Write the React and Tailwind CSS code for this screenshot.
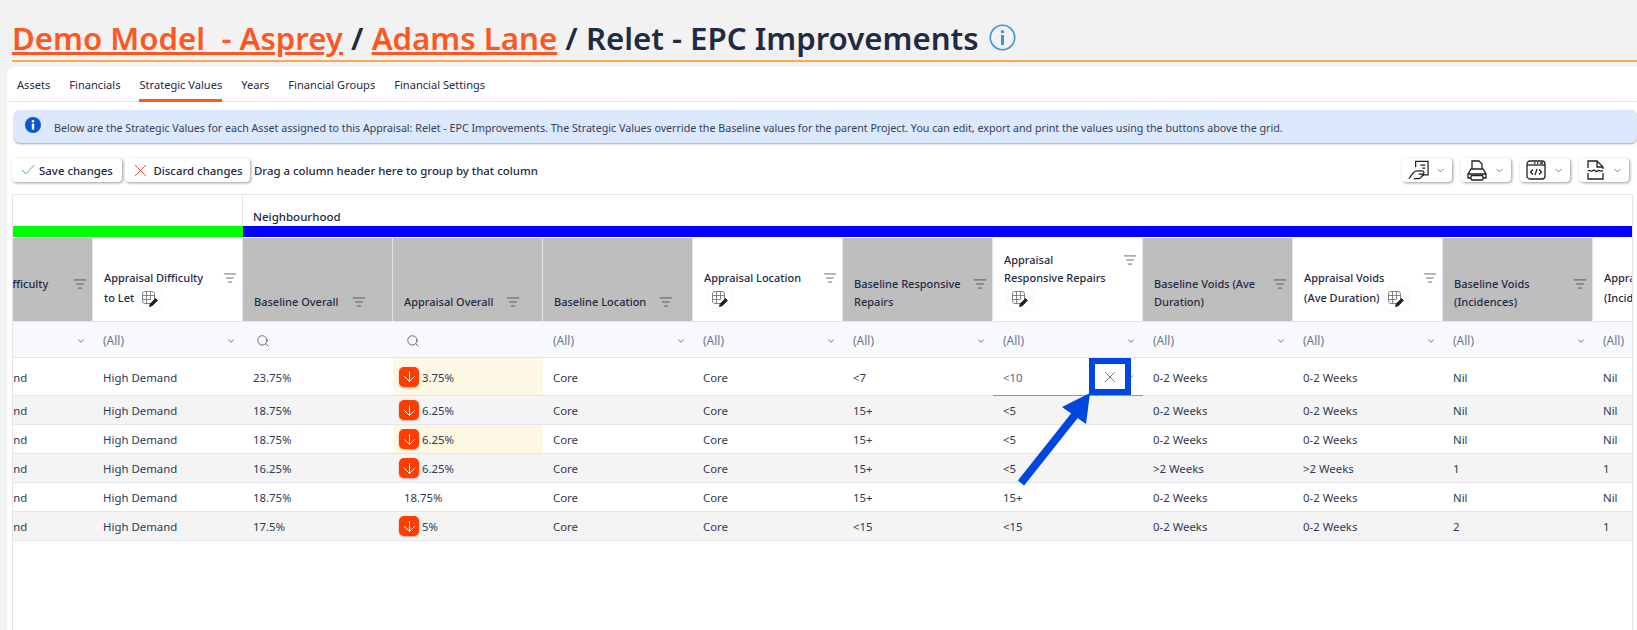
import React from "react";
import { ArrowDown, Check, ChevronDown, ListFilter, Search, X } from "lucide-react";

const tabs = ["Assets", "Financials", "Strategic Values", "Years", "Financial Groups", "Financial Settings"];

// grey = baseline (read only), white = appraisal (editable)
const columns = [
  { title: "Baseline Difficulty\nto Let", grey: true },
  { title: "Appraisal Difficulty\nto Let", box: true },
  { title: "Baseline Overall", grey: true, inlineFilter: true, search: true },
  { title: "Appraisal Overall", grey: true, inlineFilter: true, search: true },
  { title: "Baseline Location", grey: true, inlineFilter: true },
  { title: "Appraisal Location\n", box: true },
  { title: "Baseline Responsive\nRepairs", grey: true },
  { title: "Appraisal\nResponsive Repairs\n", box: true },
  { title: "Baseline Voids (Ave\nDuration)", grey: true },
  { title: "Appraisal Voids\n(Ave Duration)", box: true },
  { title: "Baseline Voids\n(Incidences)", grey: true },
  { title: "Appraisal Voids\n(Incidences)", box: true },
];

const rows = [
  { height: "h-[38px]", pad: "pt-[3px]", base: "23.75%", value: "3.75%", down: true, yellow: true, cells: ["Core", "Core", "<7", "<10", "0-2 Weeks", "0-2 Weeks", "Nil", "Nil"] },
  { height: "h-[29px]", pad: "pt-[2px]", base: "18.75%", value: "6.25%", down: true, cells: ["Core", "Core", "15+", "<5", "0-2 Weeks", "0-2 Weeks", "Nil", "Nil"] },
  { height: "h-[29px]", pad: "pt-[2px]", base: "18.75%", value: "6.25%", down: true, yellow: true, cells: ["Core", "Core", "15+", "<5", "0-2 Weeks", "0-2 Weeks", "Nil", "Nil"] },
  { height: "h-[29px]", pad: "pt-[2px]", base: "16.25%", value: "6.25%", down: true, cells: ["Core", "Core", "15+", "<5", ">2 Weeks", ">2 Weeks", "1", "1"] },
  { height: "h-[29px]", pad: "pt-[2px]", base: "18.75%", value: "18.75%", cells: ["Core", "Core", "15+", "15+", "0-2 Weeks", "0-2 Weeks", "Nil", "Nil"] },
  { height: "h-[29px]", pad: "pt-[2px]", base: "17.5%", value: "5%", down: true, cells: ["Core", "Core", "<15", "<15", "0-2 Weeks", "0-2 Weeks", "2", "1"] },
];

const TableEditIcon = () => (
  <svg width="18" height="18" viewBox="0 0 18 18" fill="none" stroke="#777" strokeWidth="0.9">
    <rect x="1.5" y="1.5" width="12" height="12" rx="2.5" />
    <path d="M1.5 5.5h12M1.5 9.5h8M5.5 1.5v12M9.5 1.5v8" />
    <path d="M8.5 16.5l.7-2.6 5.3-5.3 1.9 1.9-5.3 5.3z" fill="#222" stroke="#222" />
  </svg>
);

const HandDocIcon = () => (
  <svg width="21" height="20" viewBox="0 0 22 20" fill="none" stroke="#222" strokeWidth="1.3">
    <path d="M8 7V1h13v14h-7" />
    <path d="M13 5h5M15 8h3" />
    <path d="M1 19l4-5.5c1.5-1.8 3-2.5 5-2.5h5a1.6 1.6 0 0 1 0 3.4h-4" />
    <path d="M6 19h6l5-4.5" />
  </svg>
);

const PrinterIcon = () => (
  <svg width="20" height="21" viewBox="0 0 20 21" fill="none" stroke="#222" strokeWidth="1.3">
    <path d="M5 9V1h7l3 3v5" />
    <path d="M1 14l3-5h12l3 5v4h-3M4 18H1v-4h18" />
    <rect x="4" y="15.5" width="12" height="4.5" rx="1" />
  </svg>
);

const CodeIcon = () => (
  <svg width="20" height="20" viewBox="0 0 20 20" fill="none" stroke="#222" strokeWidth="1.3">
    <rect x="1" y="1" width="18" height="18" rx="3" />
    <path d="M1 5h18" />
    <path d="M8 3h1.5M11 3h1.5M14 3h3" />
    <path d="M7 9.5L4.5 12 7 14.5M13 9.5l2.5 2.5L13 14.5M11 9l-2 6" />
  </svg>
);

const TornFileIcon = () => (
  <svg width="17" height="20" viewBox="0 0 17 20" fill="none" stroke="#222" strokeWidth="1.3">
    <path d="M1 8V1h9l6 6v2" />
    <path d="M10 1v6h6" />
    <path d="M1 11c1.5-1.8 2.5 1 4 0s2-1.8 3.5 0 2.5-1.2 3.5-.6 2.5 1.2 4 0" />
    <path d="M1 13v6h15v-6" />
  </svg>
);

const ExportButton = ({ children }) => (
  <button className="flex h-6 w-[50px] items-center rounded bg-white pl-1 shadow-[1px_1px_3px_rgba(0,0,0,0.4)]">
    <span className="flex w-[24px] justify-center">{children}</span>
    <ChevronDown size={11} strokeWidth={1.6} className="ml-[5px] text-[#2f5fa8]" />
  </button>
);

const HeaderCell = ({ col }) => (
  <div
    className={`flex h-full w-[150px] shrink-0 flex-col justify-end border-r border-[#e3e4ec] pb-[10px] pl-[11px] pr-[5px] ${
      col.grey ? "bg-[#bebebe]" : "bg-white"
    }`}
  >
    <div className={`flex items-start ${col.inlineFilter ? "gap-[13px]" : "justify-between"}`}>
      <span className="whitespace-pre text-[11px] font-medium leading-[18px] text-[#1f2a44]">
        {col.title}
        {col.box && (
          <span className="ml-[4px] inline-flex h-6 w-6 items-center justify-center rounded-md bg-white align-middle shadow-[0_0_2px_rgba(0,0,0,0.1)]">
            <TableEditIcon />
          </span>
        )}
      </span>
      <ListFilter size={14} strokeWidth={1.2} className="mt-[2px] shrink-0 text-[#333]" />
    </div>
  </div>
);

const FilterCell = ({ col }) => (
  <div className="flex h-full w-[150px] shrink-0 items-center justify-between pl-[10px] pr-[7px] pt-[2px]">
    {col.search ? (
      <Search size={14} strokeWidth={1.2} className="ml-[3px] text-[#333]" />
    ) : (
      <>
        <span className="text-[12px] text-[#6b7690]">(All)</span>
        <ChevronDown size={10} strokeWidth={1.6} className="text-[#333]" />
      </>
    )}
  </div>
);

const Cell = ({ children, className = "pl-[10px]" }) => (
  <div className={`flex h-full w-[150px] shrink-0 items-center ${className}`}>{children}</div>
);

export default function App() {
  return (
    <div className="relative h-[630px] w-[1637px] overflow-hidden bg-[#f2f2f2] font-['Noto_Sans',sans-serif] text-[#1f2a44]">
      <h1 className="ml-3 flex h-[62px] items-end gap-[10px] border-b-2 border-[#f5ab55] pb-[2px] text-[31.2px] font-semibold leading-[40px] whitespace-pre">
        <span>
          <a className="text-[#ff5722] underline">Demo Model  - Asprey</a> / <a className="text-[#ff5722] underline">Adams Lane</a> / Relet - EPC Improvements
        </span>
        <svg width="27" height="27" viewBox="0 0 27 27" fill="none" className="mb-[7px]">
          <circle cx="13.5" cy="13.5" r="12.2" stroke="#3a94d6" strokeWidth="1.6" />
          <circle cx="13.5" cy="7.8" r="1.7" fill="#3a94d6" />
          <rect x="12" y="11" width="3" height="10" fill="#3a94d6" />
        </svg>
      </h1>

      <div className="ml-[7px] mt-[5px] h-[563px] rounded-tl-lg bg-white">
        <div className="flex h-[35px] gap-[19px] border-b border-[#e3e4ec] pl-[10px] text-[11.1px]">
          {tabs.map((tab) => (
            <div
              key={tab}
              className={`flex h-[35px] items-center pt-[1px] ${tab === "Strategic Values" ? "border-b-[3px] border-[#ff5722] pt-[4px]" : ""}`}
            >
              {tab}
            </div>
          ))}
        </div>

        <div className="ml-[7px] mt-2 flex h-[33px] items-center rounded-md bg-[#dce8fb] pl-[11px] text-[10.68px] text-[#33415c] shadow-[0_1px_2px_rgba(0,0,0,0.35)]">
          <svg width="16" height="16" viewBox="0 0 16 16" className="mb-[3px] mr-[13px] shrink-0">
            <circle cx="8" cy="8" r="8" fill="#0b57d0" />
            <circle cx="8" cy="4.3" r="1.3" fill="#fff" />
            <rect x="6.8" y="6.6" width="2.4" height="6" fill="#fff" />
          </svg>
          <span className="pt-[3px]">
            Below are the Strategic Values for each Asset assigned to this Appraisal: Relet - EPC Improvements. The Strategic Values override the Baseline values for the parent Project. You can edit, export and print the values using the buttons above the grid.
          </span>
        </div>

        <div className="ml-[5px] mr-2 mt-[15px] flex h-6 items-center text-[11.4px] font-medium">
          <button className="flex h-6 w-[110px] items-center justify-center gap-[2px] rounded bg-white pr-[2px] font-medium shadow-[1px_1px_3px_rgba(0,0,0,0.4)]">
            <Check size={18} strokeWidth={1.1} className="text-[#1f9d55]" />
            <span className="pt-[2px]">Save changes</span>
          </button>
          <button className="ml-[3px] flex h-6 w-[125px] items-center justify-center gap-[2px] rounded bg-white pr-[2px] font-medium shadow-[1px_1px_3px_rgba(0,0,0,0.4)]">
            <X size={21} strokeWidth={1} className="text-[#e53935]" />
            <span className="pt-[2px]">Discard changes</span>
          </button>
          <span className="ml-1 pt-[2px]">Drag a column header here to group by that column</span>
          <div className="ml-auto flex gap-[9px]">
            <ExportButton><HandDocIcon /></ExportButton>
            <ExportButton><PrinterIcon /></ExportButton>
            <ExportButton><CodeIcon /></ExportButton>
            <ExportButton><TornFileIcon /></ExportButton>
          </div>
        </div>

        <div className="ml-[5px] mt-3 h-[436px] w-[1621px] overflow-hidden border border-b-0 border-[#e3e4ec] text-[11.4px]">
          <div className="flex h-[31px]">
            <div className="w-[230px] border-r border-[#e3e4ec]" />
            <div className="flex items-end pb-[1px] pl-[10px] text-[11.5px] font-medium">Neighbourhood</div>
          </div>
          <div className="flex h-[11px]">
            <div className="w-[230px] bg-[#00ff00]" />
            <div className="flex-1 bg-[#0000ff]" />
          </div>
          <div className="-ml-[70px] mt-px flex h-[84px] w-[1800px] border-b border-[#e3e4ec]">
            {columns.map((col) => (
              <HeaderCell key={col.title} col={col} />
            ))}
          </div>
          <div className="-ml-[70px] flex h-[36px] w-[1800px] border-b border-[#e3e4ec] bg-[#f8f9fd]">
            {columns.map((col) => (
              <FilterCell key={col.title} col={col} />
            ))}
          </div>
          {rows.map((row, i) => (
            <div
              key={i}
              className={`-ml-[70px] flex w-[1800px] border-b border-[#e3e4ec] text-[#2f3a52] ${row.height} ${i % 2 === 1 ? "bg-[#f4f4f5]" : "bg-white"}`}
            >
              <Cell><span className={row.pad}>High Demand</span></Cell>
              <Cell><span className={row.pad}>High Demand</span></Cell>
              <Cell><span className={row.pad}>{row.base}</span></Cell>
              <Cell className={`${row.down ? "pl-[6px]" : "pl-[11px]"} ${row.yellow ? "bg-[#fdf8e4]" : ""}`}>
                {row.down && (
                  <span className="mr-[3px] flex h-[20px] w-[20px] items-center justify-center rounded-[5px] bg-[#ff3d00] shadow-[0_1px_2px_rgba(0,0,0,0.3)]">
                    <ArrowDown size={17} strokeWidth={1.3} className="text-white" />
                  </span>
                )}
                <span className={row.pad}>{row.value}</span>
              </Cell>
              {row.cells.map((text, j) =>
                i === 0 && j === 3 ? (
                  <Cell key={j} className="justify-between pl-[10px] pr-[8px] shadow-[0_1px_0_#ff7043]">
                    <span className={`text-[#5a6478] ${row.pad}`}>{text}</span>
                    <ChevronDown size={10} strokeWidth={1.6} className="text-[#333]" />
                  </Cell>
                ) : (
                  <Cell key={j}><span className={row.pad}>{text}</span></Cell>
                )
              )}
            </div>
          ))}
        </div>
      </div>

      {/* annotation drawn over the grid */}
      <div className="absolute left-[1089px] top-[358px] flex h-[37px] w-[42px] items-center justify-center border-[6px] border-[#0047e0] bg-white">
        <X size={18} strokeWidth={1} className="text-[#444]" />
      </div>
      <svg className="absolute left-[1010px] top-[385px]" width="90" height="105" viewBox="0 0 90 105">
        <path d="M11 98 L65 30" stroke="#0047e0" strokeWidth="8" />
        <path d="M80 8 L52 22 L76 39z" fill="#0047e0" />
      </svg>
    </div>
  );
}
